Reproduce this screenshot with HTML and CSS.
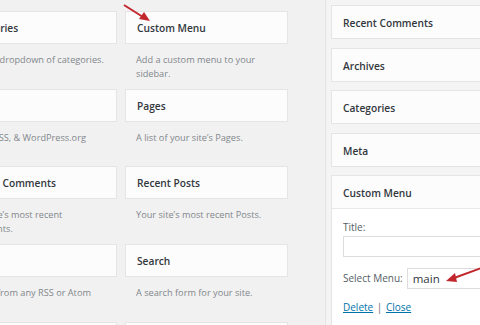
FILE: index.html
```html
<!DOCTYPE html>
<html lang="en">
<head>
    <meta charset="UTF-8">
    <title>Widgets</title>
    <link rel="stylesheet" href="styles.css">
</head>
<body>

<div class="screen">

    <!-- Available widgets -->
    <section class="available">
        <div class="widget-grid">
            <div class="widget">
                <div class="widget-top">Categories</div>
                <p class="widget-desc">A list or dropdown of categories.</p>
            </div>
            <div class="widget">
                <div class="widget-top">Custom Menu</div>
                <p class="widget-desc">Add a custom menu to your sidebar.</p>
            </div>
            <div class="widget">
                <div class="widget-top">Meta</div>
                <p class="widget-desc">Login, RSS, &amp; WordPress.org links.</p>
            </div>
            <div class="widget">
                <div class="widget-top">Pages</div>
                <p class="widget-desc">A list of your site’s Pages.</p>
            </div>
            <div class="widget">
                <div class="widget-top">Recent Comments</div>
                <p class="widget-desc">Your site’s most recent<br>comments.</p>
            </div>
            <div class="widget">
                <div class="widget-top">Recent Posts</div>
                <p class="widget-desc">Your site’s most recent Posts.</p>
            </div>
            <div class="widget">
                <div class="widget-top">RSS</div>
                <p class="widget-desc">Entries from any RSS or Atom feed.</p>
            </div>
            <div class="widget">
                <div class="widget-top">Search</div>
                <p class="widget-desc">A search form for your site.</p>
            </div>
            <div class="widget">
                <div class="widget-top">Tag Cloud</div>
            </div>
            <div class="widget">
                <div class="widget-top">Text</div>
            </div>
        </div>
    </section>

    <!-- Sidebar -->
    <section class="sidebar">
        <div class="side-widget">
            <div class="side-top">Recent Comments</div>
        </div>
        <div class="side-widget">
            <div class="side-top">Archives</div>
        </div>
        <div class="side-widget">
            <div class="side-top">Categories</div>
        </div>
        <div class="side-widget">
            <div class="side-top">Meta</div>
        </div>
        <div class="side-widget open">
            <div class="side-top">Custom Menu</div>
            <div class="side-inside">
                <label class="field-label">Title:</label>
                <div class="text-input"></div>
                <div class="menu-row">
                    <span class="field-label">Select Menu:</span>
                    <div class="select-box">
                        <span>main</span>
                        <svg class="chevron" width="10" height="6" viewBox="0 0 10 6">
                            <path d="M1 1 L5 5 L9 1" fill="none" stroke="#777" stroke-width="1.3"/>
                        </svg>
                    </div>
                </div>
                <div class="actions">
                    <a href="#">Delete</a> <span class="sep">|</span> <a href="#">Close</a>
                </div>
            </div>
        </div>
    </section>

</div>

<!-- annotation arrows -->
<svg class="arrows" width="480" height="325" viewBox="0 0 480 325">
    <line x1="124" y1="5" x2="143" y2="17" stroke="#c1272d" stroke-width="2"/>
    <polygon points="150,21 139,19 144,12" fill="#c1272d"/>
    <line x1="484" y1="267" x2="454" y2="278" stroke="#c1272d" stroke-width="2"/>
    <polygon points="446,281 455,273 457,282" fill="#c1272d"/>
</svg>

</body>
</html>
```

FILE: styles.css
```css
/* General styles */
body {
    margin: 0;
    width: 480px;
    height: 325px;
    overflow: hidden;
    background-color: #f1f1f1;
    font-family: 'Open Sans', 'DejaVu Sans', sans-serif;
    color: #23282d;
    position: relative;
}

.screen {
    display: flex;
    height: 325px;
}

/* Available widgets */
.available {
    width: 325px;
    flex-shrink: 0;
    overflow: hidden;
}

.widget-grid {
    display: grid;
    grid-template-columns: 163px 163px;
    grid-auto-rows: 70px;
    column-gap: 8px;
    row-gap: 7.7px;
    margin-left: -46px;
    padding-top: 11px;
}

.widget-top {
    height: 31px;
    line-height: 32px;
    padding-left: 11px;
    background-color: #fcfcfc;
    border: 1px solid #e5e5e5;
    font-size: 10.2px;
    font-weight: 600;
    color: #32373c;
    white-space: nowrap;
    overflow: hidden;
}

.widget-desc {
    margin: 9px 0 0;
    padding-left: 11px;
    padding-right: 12px;
    font-size: 9.2px;
    line-height: 13.5px;
    color: #82878c;
}

/* Sidebar */
.sidebar {
    flex: 1;
    min-width: 0;
    border-left: 1px solid #e4e4e4;
    background-color: #f4f4f4;
    padding: 5px 0 0 5px;
    overflow: hidden;
}

.side-widget {
    width: 200px;
    margin-bottom: 8.6px;
    background-color: #fcfcfc;
    border: 1px solid #e5e5e5;
}

.side-top {
    height: 32px;
    line-height: 34px;
    padding-left: 11px;
    font-size: 10.2px;
    font-weight: 600;
    color: #32373c;
}

.side-widget.open .side-top {
    border-bottom: 1px solid #e8e8e8;
}

.side-inside {
    background-color: #fff;
    padding: 12px 0 20px 11px;
}

.field-label {
    display: block;
    font-size: 10px;
    line-height: 13px;
    color: #555d66;
}

.text-input {
    margin-top: 2px;
    height: 19px;
    border: 1px solid #ddd;
    background-color: #fff;
}

.menu-row {
    display: flex;
    align-items: center;
    gap: 4px;
    margin-top: 11px;
}

.menu-row .field-label {
    display: inline;
}

.select-box {
    flex: 1;
    height: 19px;
    display: flex;
    align-items: center;
    justify-content: space-between;
    padding: 0 10px 0 5px;
    border: 1px solid #ddd;
    background-color: #fff;
    font-size: 11.5px;
    color: #32373c;
}

.actions {
    margin-top: 12px;
    font-size: 10px;
    line-height: 13px;
    color: #666;
}

.actions a {
    color: #0073aa;
}

.sep {
    margin: 0 1px;
}

.arrows {
    position: absolute;
    left: 0;
    top: 0;
    pointer-events: none;
}
```
